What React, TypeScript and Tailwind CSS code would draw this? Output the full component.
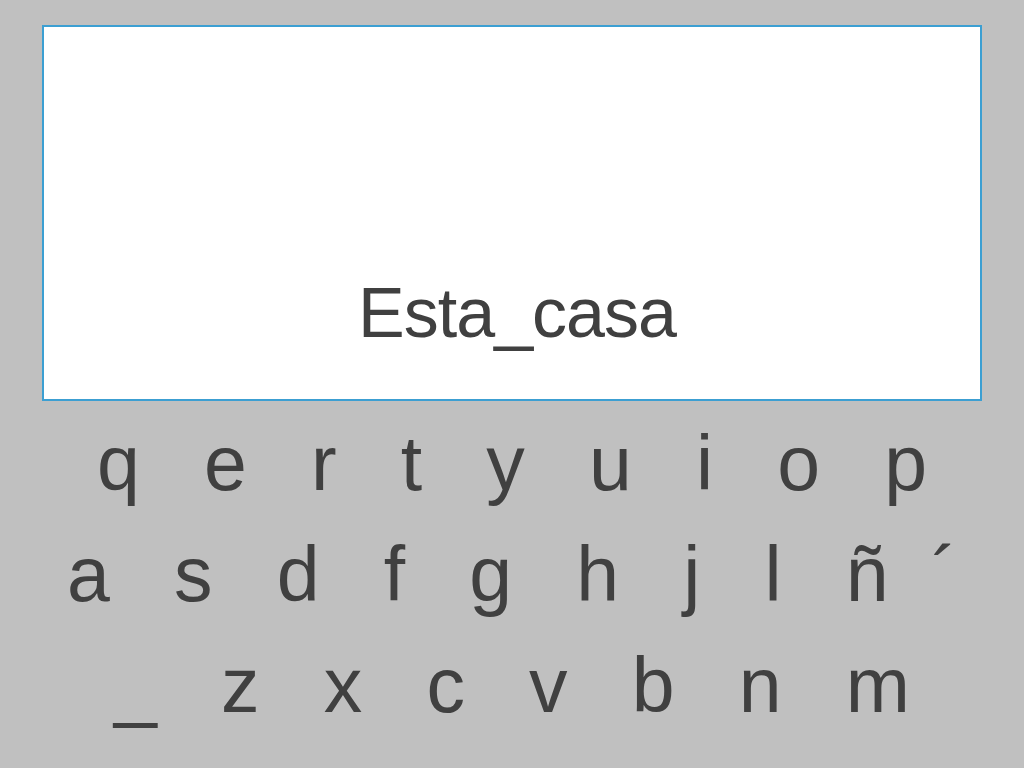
const rows = [
  "q   e   r   t   y   u   i   o   p",
  "a   s   d   f   g   h   j   l   ñ  ´",
  "_   z   x   c   v   b   n   m",
];

export default function App() {
  return (
    <div
      className="w-[1024px] h-[768px] bg-[#c0c0c0] pt-[25px] overflow-hidden"
      style={{ fontFamily: '"Liberation Sans", Arial, sans-serif' }}
    >
      <div className="mx-[42px] h-[376px] bg-white border-2 border-[#3c9fd2] flex flex-col justify-end items-center pb-[51px]">
        <div className="pl-[10px] text-[70px] leading-none tracking-[-1px] text-[#404040]">Esta_casa</div>
      </div>
      <div className="mt-[7px] flex flex-col items-center text-[77px] leading-[111px] text-[#404040]">
        {rows.map((r, i) => (
          <div key={i} className="whitespace-pre">
            {r}
          </div>
        ))}
      </div>
    </div>
  );
}
